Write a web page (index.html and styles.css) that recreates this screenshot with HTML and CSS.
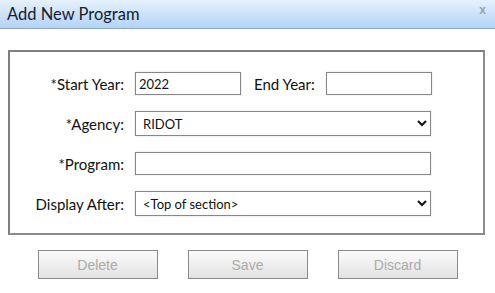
FILE: index.html
```html
<!DOCTYPE html>
<html lang="en">
<head>
    <meta charset="UTF-8">
    <meta name="viewport" content="width=device-width, initial-scale=1.0">
    <title>Add New Program</title>

    <link rel="stylesheet" href="styles.css">
</head>
<body>

    <div class="dialog">
        <div class="titre">
            <span>Add New Program</span>
            <span class="fermer">x</span>
        </div>

        <div class="formulaire">
            <div class="ligne">
                <label>*Start Year:</label>
                <div class="annees">
                    <input type="text" class="court" value="2022">
                    <label class="fin">End Year:</label>
                    <input type="text" class="court" value="">
                </div>
            </div>

            <div class="ligne">
                <label>*Agency:</label>
                <select>
                    <option>RIDOT</option>
                </select>
            </div>

            <div class="ligne">
                <label>*Program:</label>
                <input type="text" class="long" value="">
            </div>

            <div class="ligne">
                <label>Display After:</label>
                <select>
                    <option>&lt;Top of section&gt;</option>
                </select>
            </div>
        </div>

        <div class="boutons">
            <button disabled>Delete</button>
            <button disabled>Save</button>
            <button disabled>Discard</button>
        </div>
    </div>

</body>
</html>
```

FILE: styles.css
```css
body {
    margin: 0;
    padding: 0;
    font-family: Lato, "Open Sans", sans-serif;
    background-color: white;
    color: #111;
}

.titre {
    height: 28px;
    border-bottom: 1px solid #8ea8c3;
    background: linear-gradient(to bottom, #e6f1fd, #b2d3f7);
    display: flex;
    align-items: center;
    justify-content: space-between;
    padding: 0 9px 0 7px;
    font-size: 16.5px;
    color: #15202c;
}

.fermer {
    font-family: "Liberation Sans", Arial, sans-serif;
    font-size: 12px;
    font-weight: bold;
    color: #9aa3ad;
    align-self: flex-start;
    margin-top: 3px;
}

.formulaire {
    margin: 21px 10px 0 8px;
    border: 2px solid #7e7e7e;
    border-right-color: #8c8c8c;
    border-bottom-color: #8c8c8c;
    padding: 19px 0 17px 0;
    display: flex;
    flex-direction: column;
    gap: 15px;
}

.ligne {
    display: flex;
    align-items: center;
    height: 25px;
    gap: 11px;
}

.ligne>label {
    width: 114px;
    text-align: right;
    font-size: 15px;
}

.annees {
    display: flex;
    align-items: center;
}

.fin {
    font-size: 15px;
    margin: 0 11px 0 13px;
}

input, select {
    font-family: Lato, "Open Sans", sans-serif;
    font-size: 13px;
    color: #111;
    border: 1px solid #878787;
    border-radius: 0;
    background-color: white;
    box-shadow: 0 0 2px #dcdcdc;
    box-sizing: border-box;
    margin: 0;
}

input {
    height: 23px;
    padding: 0 3px;
}

.court {
    width: 106px;
}

.long {
    width: 296px;
}

select {
    width: 296px;
    height: 25px;
    padding: 0 3px;
}

.boutons {
    display: flex;
    justify-content: center;
    gap: 30px;
    margin-top: 15px;
}

.boutons>button {
    width: 120px;
    height: 29px;
    border: 1px solid #8a8a8a;
    background: linear-gradient(to bottom, #fbfbfb, #e2e2e2);
    font-family: "Liberation Sans", Arial, sans-serif;
    font-size: 14px;
    color: #ababab;
}
```
